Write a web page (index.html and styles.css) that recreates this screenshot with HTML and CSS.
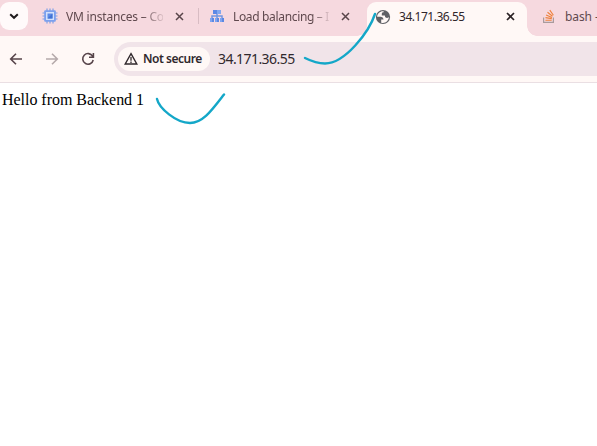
FILE: index.html
```html
<!DOCTYPE html>
<html lang="en">
<head>
<meta charset="utf-8">
<title>34.171.36.55</title>
<link rel="stylesheet" href="styles.css">
</head>
<body>
<div class="browser">
  <header class="tabs">
    <button class="tab-search" aria-label="Search tabs"><svg width="10" height="7" viewBox="0 0 10 7"><path d="M1.2 1.2 5 4.8 8.8 1.2" fill="none" stroke="#1f1a1c" stroke-width="2"/></svg></button>
    <div class="tab tab-vm">
      <svg class="favicon" viewBox="0 0 16 16"><path d="M5 .5v15M8 .5v15M11 .5v15M.5 5h15M.5 8h15M.5 11h15" stroke="#7d9fe6" stroke-width="1.2"/><rect x="2.2" y="2.2" width="11.6" height="11.6" rx="1" fill="#7ba0ee"/><rect x="4" y="4" width="8" height="8" fill="#d3e1fb"/><path d="M5.5 5.5h5v5h-5z" fill="#5d8ae6"/><path d="M10.5 5.5v5h-5z" fill="#4073d3"/></svg>
      <span class="label vm-label">VM instances – Co</span>
      <svg class="close" viewBox="0 0 9 9"><path d="m1 1 7 7M8 1 1 8"/></svg>
    </div>
    <i class="divider"></i>
    <div class="tab tab-load">
      <svg class="favicon" viewBox="0 0 16 16"><path d="M8 5v7M3 12V8h10v4" fill="none" stroke="#7197e2" stroke-width="1.5"/><path d="M4 2h8v4H4z" fill="#5c88e5"/><path d="M8 2h4v4H8z" fill="#83a8ee"/><path d="M1 10h4v4H1zM6 10h4v4H6zM11 10h4v4h-4z" fill="#7fa4f1"/><path d="M3 10h2v4H3zM8 10h2v4H8zM13 10h2v4h-2z" fill="#5c89e2"/></svg>
      <span class="label load-label">Load balancing – I</span>
      <svg class="close" viewBox="0 0 9 9"><path d="m1 1 7 7M8 1 1 8"/></svg>
    </div>
    <div class="tab active">
      <svg class="favicon" viewBox="0 0 16 16"><circle cx="8" cy="8" r="7.1" fill="#5f6065"/><path d="M8.7 2.2C5.2 1.8 2.2 4.4 2.1 7.8h3.3c1.8 0 3.1 1.2 3.1 2.7H6.2v3.2c3.9 1.1 7.6-1.7 7.7-5.7-.8.8-2 1.3-3.1.6-.8-.5-.9-1.5-.9-2.1H6.8V4.8c0-.9.7-1.5 1.5-1.5h.4z" fill="#fff8f6"/></svg>
      <span class="label active-label">34.171.36.55</span>
      <svg class="close" viewBox="0 0 9 9"><path d="m1 1 7 7M8 1 1 8"/></svg>
    </div>
    <div class="tab tab-bash">
      <svg class="favicon" viewBox="0 0 16 16"><path d="M2.6 9.5v4.9h9.8V9.5" fill="none" stroke="#a99b9c" stroke-width="1.2"/><path d="M4.4 12.2h6.3M4.5 9.6l6.3 1M5.1 6.9l5.9 2.5M6.5 4.3l5 4M8.8 2.1l3.6 5.2" stroke="#ee813c" stroke-width="1.1"/></svg>
      <span class="label bash-label">bash -</span>
    </div>
  </header>
  <nav class="toolbar">
    <svg class="nav-icon" viewBox="0 0 14 14"><path d="M13 7H2M7 1.7 1.7 7 7 12.3"/></svg>
    <svg class="nav-icon forward" viewBox="0 0 14 14"><path d="M1 7h11M7 1.7 12.3 7 7 12.3"/></svg>
    <svg class="nav-icon reload" viewBox="0 0 14 14"><path d="M11.6 4.2A5.3 5.3 0 1 0 12.2 8M12.4 1v4.3H8"/></svg>
    <div class="address">
      <div class="security">
        <svg class="warning" viewBox="0 0 14 14"><path d="M7 1.7 12.8 12H1.2z" fill="none" stroke="#30282c" stroke-width="1.4"/><path d="M7 5v3.8M7 9.6v1.3" stroke="#30282c" stroke-width="1.3"/></svg>
        <span>Not secure</span>
      </div>
      <span class="url">34.171.36.55</span>
    </div>
  </nav>
  <main>Hello from Backend 1</main>
  <svg class="ink" viewBox="0 0 597 446"><path d="M305 58C312 61.500 318 63.500 325 63.500C345 63.500 369 32 375 14M157 99C159 108 176 123 190 123C203 123 212 110 224 94.500"/></svg>
</div>
</body>
</html>
```

FILE: styles.css
```css
* { box-sizing: border-box; }
body { margin: 0; overflow: hidden; background: #fff; }
.browser { position: relative; width: 597px; height: 446px; overflow: hidden; }
.tabs { display: flex; height: 36px; background: #f6d9df; font: 12px/16px "Noto Sans", sans-serif; color: #60494e; }
.tab-search { width: 28px; height: 28px; margin-top: 2px; padding: 0; border: 0; border-radius: 9px; background: #fffafa; display: grid; place-items: center; }
.tab { display: flex; align-items: center; height: 32px; flex: none; }
.tab-vm { width: 156px; margin-left: 14px; }
.favicon { width: 16px; height: 16px; flex: none; }
.label { margin-left: 8px; padding-top: 1px; white-space: nowrap; flex: none; }
.vm-label { width: 97px; letter-spacing: -.2px; }
.load-label { width: 96px; letter-spacing: -.34px; }
.vm-label { mask-image: linear-gradient(90deg, #000 78%, rgba(0, 0, 0, .15)); }
.load-label { mask-image: linear-gradient(90deg, #000 82%, rgba(0, 0, 0, .15)); }
.close { width: 9px; height: 9px; margin-left: auto; fill: none; stroke: #59454a; stroke-width: 1.5; }
.tab-vm .close { margin-right: 14.5px; }
.divider { width: 1px; height: 16px; margin-top: 8px; background: #d8bcc3; flex: none; }
.tab-load { width: 168px; padding-left: 10px; }
.tab-load .close { margin-right: 17.5px; }
.active { position: relative; width: 160px; height: 34px; margin-top: 2px; padding: 0 12px 5px 8px; border-radius: 9px 9px 0 0; background: #fff8f6; color: #30262a; }
.active::before, .active::after { content: ""; position: absolute; bottom: 0; width: 10px; height: 10px; }
.active::before { right: 100%; background: radial-gradient(circle at 0 0, transparent 9.5px, #fff8f6 10px); }
.active::after { left: 100%; background: radial-gradient(circle at 100% 0, transparent 9.5px, #fff8f6 10px); }
.active-label { padding-top: 0; letter-spacing: -.48px; }
.active .close { stroke: #2b2225; stroke-width: 1.7; }
.tab-bash { width: 70px; padding-left: 14px; }
.bash-label { letter-spacing: -.1px; }
.toolbar { display: flex; align-items: center; height: 47px; padding: 0 0 1px 9px; background: #fff8f6; border-bottom: 1px solid #eadfe3; }
.nav-icon { width: 14px; height: 14px; margin-right: 22px; flex: none; fill: none; stroke: #57444a; stroke-width: 1.6; }
.forward { stroke: #b5a9aa; }
.reload { margin-right: 19px; }
.address { display: flex; align-items: center; flex: 1; height: 34px; padding-left: 4px; border-radius: 17px 0 0 17px; background: #f1e4e9; font: 14px/20px "Noto Sans", sans-serif; color: #30282d; }
.security { display: flex; align-items: center; width: 92px; height: 24px; padding-left: 6px; border-radius: 12px; background: #fff8f6; font-size: 12px; font-weight: 600; letter-spacing: -.48px; white-space: nowrap; }
.warning { width: 14px; height: 14px; margin-right: 5px; }
.url { margin-left: 8px; letter-spacing: -.56px; }
main { padding: 8px 2px; font: 16px/18px "Liberation Serif", serif; letter-spacing: -.03px; color: #000; }
.ink { position: absolute; inset: 0; width: 597px; height: 446px; pointer-events: none; fill: none; stroke: #14a7c8; stroke-width: 2.4; stroke-linecap: round; }
```
